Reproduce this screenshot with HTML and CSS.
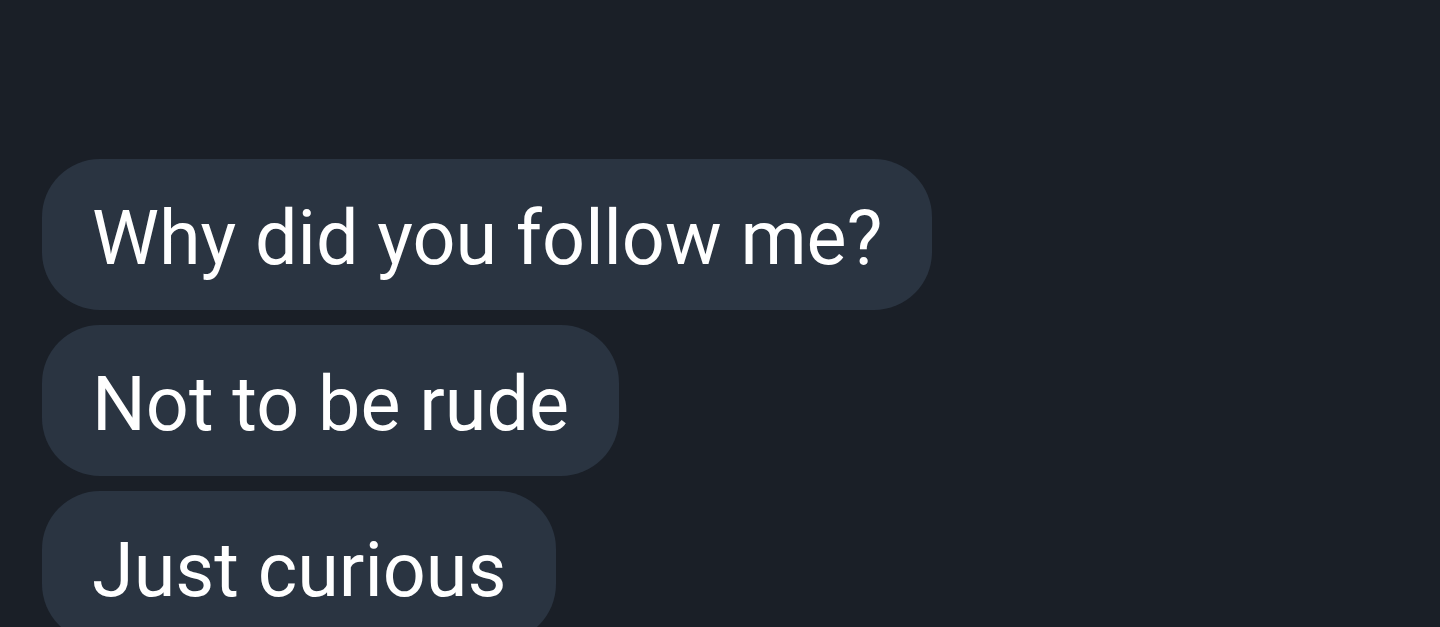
FILE: index.html
```html
<!DOCTYPE html>
<html lang="en">
<head>
<meta charset="utf-8">
<title>Chat</title>
<link rel="stylesheet" href="styles.css">
</head>
<body>
<div class="thread">
  <div class="bubble">Why did you follow me?</div>
  <div class="bubble">Not to be rude</div>
  <div class="bubble">Just curious</div>
</div>
</body>
</html>
```

FILE: styles.css
```css
html, body {
  margin: 0;
  padding: 0;
  background: #1a1f27;
  height: 100%;
  overflow: hidden;
}
.thread {
  display: flex;
  flex-direction: column;
  align-items: flex-start;
  gap: 15px;
  padding: 159px 0 0 42px;
}
.bubble {
  box-sizing: border-box;
  height: 151px;
  display: flex;
  align-items: center;
  padding: 6px 50px 0;
  border-radius: 58px;
  background: #2a3441;
  color: #ffffff;
  font-family: Roboto, "Noto Sans", sans-serif;
  font-size: 75.5px;
  white-space: nowrap;
}
```
